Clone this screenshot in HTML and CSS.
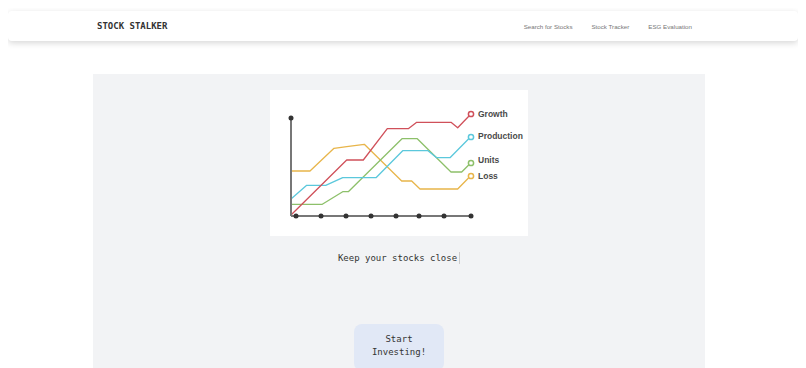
FILE: index.html
```html
<!DOCTYPE html>
<html>
  <head>
    <meta charset="UTF-8">
    <title>Stock Stalker</title>
    <link rel="stylesheet" href="styles.css">
  </head>
  <body>
    <header class="navbar">
      <div class="brand">STOCK STALKER</div>
      <nav class="nav-links">
        <a href="#">Search for Stocks</a>
        <a href="#">Stock Tracker</a>
        <a href="#">ESG Evaluation</a>
      </nav>
    </header>

    <main class="hero">
      <div class="chart">
        <svg width="258" height="146" viewBox="0 0 258 146">
          <g fill="none" stroke-width="1.3" stroke-linejoin="round">
            <polyline stroke="#e8b54a" points="21,81 40,81 64,58.3 76.7,56.7 94.3,54.3 131.7,91 141.7,91 150,99 187.7,99 200.7,85.7"/>
            <polyline stroke="#8dc06a" points="21,114.3 52.3,114.3 72.7,101.7 78.3,101.7 132,48.7 147.3,48.7 181,82 191.7,82 200.7,73"/>
            <polyline stroke="#5bc8dc" points="21,109 36.7,95.3 55.7,95.3 72.7,87.7 106,87.7 132.7,60.7 158,60.7 166.7,67.7 180,67.7 200.7,46.7"/>
            <polyline stroke="#d0505a" points="21,125 76.7,70 93.3,70 117.3,38.7 138.3,38.7 146.7,32.3 181,32.3 187.7,37.7 200.7,24.3"/>
          </g>
          <g stroke="#777" stroke-width="2">
            <line x1="21" y1="28" x2="21" y2="126"/>
            <line x1="21" y1="126" x2="201" y2="126"/>
          </g>
          <g fill="#333">
            <circle cx="21" cy="28" r="2.5"/>
            <circle cx="26" cy="126" r="2.5"/>
            <circle cx="51" cy="126" r="2.5"/>
            <circle cx="76" cy="126" r="2.5"/>
            <circle cx="101" cy="126" r="2.5"/>
            <circle cx="126" cy="126" r="2.5"/>
            <circle cx="149" cy="126" r="2.5"/>
            <circle cx="174" cy="126" r="2.5"/>
            <circle cx="201" cy="126" r="2.5"/>
          </g>
          <g fill="#fff" stroke-width="1.5">
            <circle cx="201" cy="24" r="2.6" stroke="#d0505a"/>
            <circle cx="201" cy="47" r="2.6" stroke="#5bc8dc"/>
            <circle cx="201" cy="73" r="2.6" stroke="#8dc06a"/>
            <circle cx="201" cy="86" r="2.6" stroke="#e8b54a"/>
          </g>
          <g class="legend">
            <text x="208" y="27">Growth</text>
            <text x="208" y="49">Production</text>
            <text x="208" y="73">Units</text>
            <text x="208" y="89">Loss</text>
          </g>
        </svg>
      </div>

      <p class="tagline">Keep your stocks close<span class="cursor"></span></p>

      <button class="cta">Start Investing!</button>
    </main>
  </body>
</html>
```

FILE: styles.css
```css
body {
  margin: 8px;
  font-family: "DejaVu Sans Mono", "Liberation Mono", monospace;
  color: #333;
  background: #fff;
  overflow: hidden;
}

.navbar {
  margin-top: 3px;
  height: 30px;
  padding: 0 106px 0 89px;
  display: flex;
  align-items: center;
  justify-content: space-between;
  background: #fff;
  border-radius: 4px;
  box-shadow: 0 2px 6px rgba(0, 0, 0, 0.16);
}

.brand {
  font-family: "DejaVu Sans Mono", monospace;
  font-weight: bold;
  font-size: 9px;
  color: #333;
}

.nav-links {
  display: flex;
  gap: 19px;
}

.nav-links a {
  font-family: "Liberation Sans", Arial, sans-serif;
  font-size: 6.2px;
  color: #777;
  text-decoration: none;
}

.hero {
  margin: 33px 93px 0 85px;
  padding-top: 16px;
  height: 278px;
  background: #f2f3f5;
  display: flex;
  flex-direction: column;
  align-items: center;
  overflow: hidden;
}

.chart {
  flex: none;
  width: 258px;
  height: 146px;
  background: #fff;
}

.chart svg {
  display: block;
}

.legend text {
  font-family: "Liberation Sans", Arial, sans-serif;
  font-size: 8.5px;
  font-weight: bold;
  fill: #4a4a4a;
}

.tagline {
  margin: 16px 0 0;
  font-size: 9px;
  line-height: 12px;
  color: #333;
  display: flex;
  align-items: center;
}

.cursor {
  display: inline-block;
  width: 1px;
  height: 12px;
  margin-left: 2px;
  background: #ccc;
}

.cta {
  flex: none;
  margin-top: 60px;
  width: 90px;
  padding: 9px 12px 12px;
  border: none;
  border-radius: 8px;
  background: #e1e8f6;
  font-family: "DejaVu Sans Mono", "Liberation Mono", monospace;
  font-size: 9px;
  line-height: 13px;
  color: #333;
}
```
